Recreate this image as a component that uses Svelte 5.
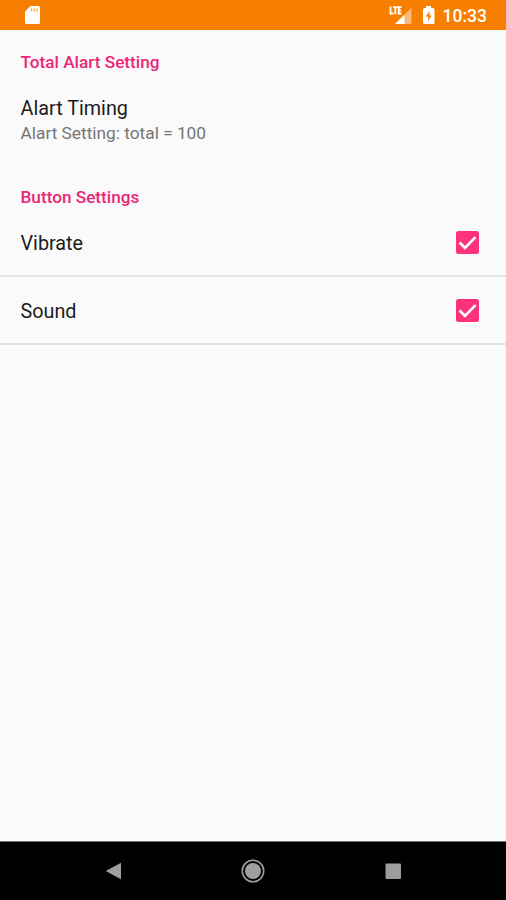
<script>
  let vibrate = true;
  let sound = true;
</script>

<style>
  :global(body) {
    background-color: #fafafa;
  }

  .screen {
    display: flex;
    flex-direction: column;
    height: 900px;
    background-color: #fafafa;
    font-family: Roboto, sans-serif;
    color: #1c1c1c;
  }

  .status-bar {
    display: flex;
    align-items: center;
    box-sizing: border-box;
    height: 30px;
    padding: 0 19px 0 24px;
    background-color: #f77f00;
    color: #fff;
  }

  .status-bar svg {
    display: block;
  }

  .signal {
    margin-left: auto;
  }

  .battery {
    margin-left: 10px;
  }

  .time {
    margin-left: 8px;
    font-size: 17.5px;
    font-weight: 500;
    line-height: 30px;
    padding-top: 2px;
  }

  .settings {
    flex: 1;
  }

  h2 {
    margin: 0;
    padding: 21px 20px 0 20.5px;
    font-size: 17.2px;
    font-weight: 500;
    line-height: 22px;
    color: #ec2676;
  }

  .preference {
    height: 68px;
    padding: 24px 20px 0 20.5px;
  }

  .title {
    font-size: 19.8px;
    line-height: 24px;
  }

  .summary {
    font-size: 17.3px;
    line-height: 25px;
    color: #757575;
  }

  .check-list {
    padding-top: 1px;
  }

  .check-row {
    display: flex;
    align-items: center;
    justify-content: space-between;
    box-sizing: border-box;
    height: 68px;
    padding: 0 27px 0 20.5px;
    border-bottom: 2px solid #e3e3e3;
    cursor: pointer;
  }

  .check-row .title {
    padding-top: 4px;
  }

  .check-row input {
    position: absolute;
    opacity: 0;
  }

  .nav-bar {
    display: flex;
    align-items: center;
    justify-content: center;
    gap: 116px;
    box-sizing: border-box;
    height: 59px;
    border-top: 1px solid #777;
    background-color: #000;
  }

  .nav-bar button {
    width: 24px;
    height: 24px;
    padding: 0;
    border: none;
    background: none;
  }

  .nav-bar svg {
    display: block;
  }
</style>

<div class="screen">
  <header class="status-bar">
    <svg width="17" height="20" viewBox="0 0 17 20">
      <path fill="#fff" d="M6.500 1h8Q16 1 16 2.500v15Q16 19 14.500 19h-12Q1 19 1 17.500V6.500z" />
      <path stroke="#f77f00" stroke-width="1.500" d="M7.500 3.500v3M10.300 3.500v3M13 3.500v3" opacity=".65" />
    </svg>
    <svg class="signal" width="23" height="20" viewBox="0 0 23 20">
      <path fill="#fbb878" d="M22.500 3v16H6z" />
      <path fill="#fff" d="M15.500 9.800V19H6z" />
      <path fill="none" stroke="#fff" stroke-width="1.800" d="M1.500 1.500v7h3M4 2.200h4.500M6.300 2.200v7M12.500 2.200H9.600v6.300h2.900M9.600 5.300h2.500" />
    </svg>
    <svg class="battery" width="13" height="20" viewBox="0 0 13 20">
      <path fill="#fff" d="M4 1h5v2h2q1.500 0 1.500 1.500v13Q12.500 19 11 19H2.500Q1 19 1 17.500v-13Q1 3 2.500 3H4z" />
      <path fill="#f77f00" d="M7.500 6L3.800 11.500h2.300V16l3.500-5.500H7.500z" />
    </svg>
    <span class="time">10:33</span>
  </header>

  <main class="settings">
    <section>
      <h2>Total Alart Setting</h2>
      <div class="preference">
        <div class="title">Alart Timing</div>
        <div class="summary">Alart Setting: total = 100</div>
      </div>
    </section>

    <section>
      <h2>Button Settings</h2>
      <div class="check-list">
        <label class="check-row">
          <span class="title">Vibrate</span>
          <input type="checkbox" bind:checked={vibrate} />
          <svg width="23" height="23" viewBox="0 0 23 23">
            {#if vibrate}
              <rect width="23" height="23" rx="2.500" fill="#fc337c" />
              <path fill="none" stroke="#fff" stroke-width="2.600" d="M3.500 11.500l5.500 5.300L19.500 6.200" />
            {:else}
              <rect x="1" y="1" width="21" height="21" rx="2" fill="none" stroke="#757575" stroke-width="2" />
            {/if}
          </svg>
        </label>
        <label class="check-row">
          <span class="title">Sound</span>
          <input type="checkbox" bind:checked={sound} />
          <svg width="23" height="23" viewBox="0 0 23 23">
            {#if sound}
              <rect width="23" height="23" rx="2.500" fill="#fc337c" />
              <path fill="none" stroke="#fff" stroke-width="2.600" d="M3.500 11.500l5.500 5.300L19.500 6.200" />
            {:else}
              <rect x="1" y="1" width="21" height="21" rx="2" fill="none" stroke="#757575" stroke-width="2" />
            {/if}
          </svg>
        </label>
      </div>
    </section>
  </main>

  <nav class="nav-bar">
    <button aria-label="Back">
      <svg width="24" height="24" viewBox="0 0 24 24">
        <path fill="#9e9e9e" d="M4.700 12L20 3.800v16.400z" />
      </svg>
    </button>
    <button aria-label="Home">
      <svg width="24" height="24" viewBox="0 0 24 24">
        <circle cx="12" cy="12" r="8" fill="#9e9e9e" />
        <circle cx="12" cy="12" r="10.700" fill="none" stroke="#9e9e9e" stroke-width="1.600" />
      </svg>
    </button>
    <button aria-label="Overview">
      <svg width="24" height="24" viewBox="0 0 24 24">
        <rect x="4.500" y="4.500" width="15.500" height="15.500" rx="1" fill="#9e9e9e" />
      </svg>
    </button>
  </nav>
</div>
